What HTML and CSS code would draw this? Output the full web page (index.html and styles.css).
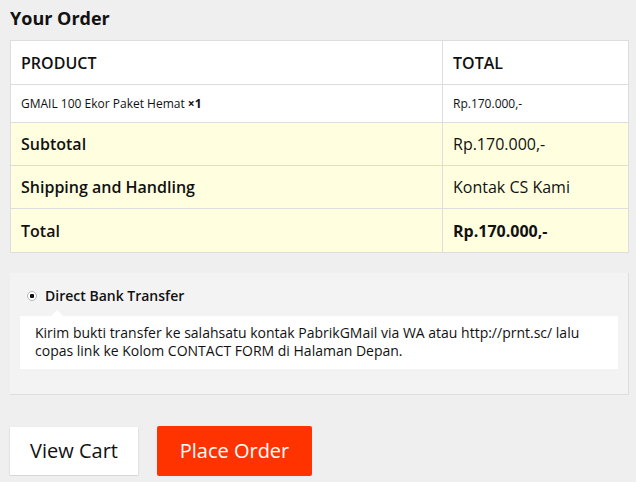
FILE: index.html
```html
<!DOCTYPE html>
<html lang="id">
<head>
    <meta charset="UTF-8">
    <title>Your Order</title>
    <link rel="stylesheet" href="styles.css">
</head>
<body>
    <div class="checkout">
        <h3 class="order-title">Your Order</h3>
        <table class="order-table">
            <thead>
                <tr>
                    <th class="col-product">PRODUCT</th>
                    <th class="col-total">TOTAL</th>
                </tr>
            </thead>
            <tbody>
                <tr class="cart-item">
                    <td>GMAIL 100 Ekor Paket Hemat <strong>×1</strong></td>
                    <td>Rp.170.000,-</td>
                </tr>
            </tbody>
            <tfoot>
                <tr>
                    <th>Subtotal</th>
                    <td>Rp.170.000,-</td>
                </tr>
                <tr>
                    <th>Shipping and Handling</th>
                    <td>Kontak CS Kami</td>
                </tr>
                <tr class="order-total">
                    <th>Total</th>
                    <td><strong>Rp.170.000,-</strong></td>
                </tr>
            </tfoot>
        </table>

        <div class="payment">
            <label class="payment-method">
                <input type="radio" name="pay" checked>
                <span>Direct Bank Transfer</span>
            </label>
            <div class="payment-box">
                <p>Kirim bukti transfer ke salahsatu kontak PabrikGMail via WA atau http://prnt.sc/ lalu copas link ke Kolom CONTACT FORM di Halaman Depan.</p>
            </div>
        </div>

        <div class="actions">
            <a href="#" class="btn btn-cart">View Cart</a>
            <a href="#" class="btn btn-order">Place Order</a>
        </div>
    </div>
</body>
</html>
```

FILE: styles.css
```css
body {
    margin: 0;
    background: #efefef;
    color: #111;
    font-family: "Open Sans", Arial, sans-serif;
}
.checkout {
    padding: 6px 7px 0 10px;
}
.order-title {
    margin: 0 0 10px;
    font-size: 18px;
    font-weight: 700;
    line-height: 24px;
}
.order-table {
    width: 100%;
    border-collapse: collapse;
    border: 1px solid #dddddd;
    background: #fff;
}
.order-table th,
.order-table td {
    border: 1px solid #dddddd;
    padding: 0 10px;
    text-align: left;
    font-size: 16px;
}
.order-table thead th {
    height: 43px;
    font-weight: 600;
}
.col-product {
    width: 411px;
}
.cart-item td {
    height: 37px;
    font-size: 12px;
}
.order-table tfoot tr {
    background: #ffffe0;
}
.order-table tfoot th,
.order-table tfoot td {
    height: 42px;
}
.order-table tfoot .order-total th,
.order-table tfoot .order-total td {
    height: 43px;
}
.order-table tfoot th {
    font-weight: 600;
}
.payment {
    margin-top: 20px;
    padding: 13px 10px 25px;
    background: #f3f3f3;
    border-right: 1px solid #dddddd;
    border-bottom: 1px solid #dddddd;
}
.payment-method {
    display: flex;
    align-items: center;
    gap: 8px;
    padding-left: 7px;
    font-size: 14px;
    font-weight: 600;
}
.payment-method input {
    appearance: none;
    -webkit-appearance: none;
    margin: 0;
    width: 10px;
    height: 10px;
    border: 1px solid #b8b8b8;
    border-radius: 50%;
    background: radial-gradient(circle, #111 0 2px, #fff 2.5px);
}
.payment-box {
    position: relative;
    margin-top: 11px;
    padding: 8px 15px 9px;
    background: #fff;
}
.payment-box::before {
    content: "";
    position: absolute;
    top: -6px;
    left: 31px;
    border: 6px solid transparent;
    border-top: 0;
    border-bottom-color: #fff;
}
.payment-box p {
    margin: 0;
    font-size: 14px;
    line-height: 18px;
}
.actions {
    display: flex;
    align-items: center;
    gap: 19px;
    margin-top: 31px;
}
.btn {
    display: block;
    font-size: 20px;
    text-decoration: none;
    line-height: 48px;
    text-align: center;
}
.btn-cart {
    width: 128px;
    background: #fff;
    color: #111;
    box-shadow: 0 1px 2px rgba(0,0,0,0.15);
}
.btn-order {
    width: 155px;
    line-height: 50px;
    background: #ff3300;
    color: #fff;
    border-radius: 2px;
}
```
